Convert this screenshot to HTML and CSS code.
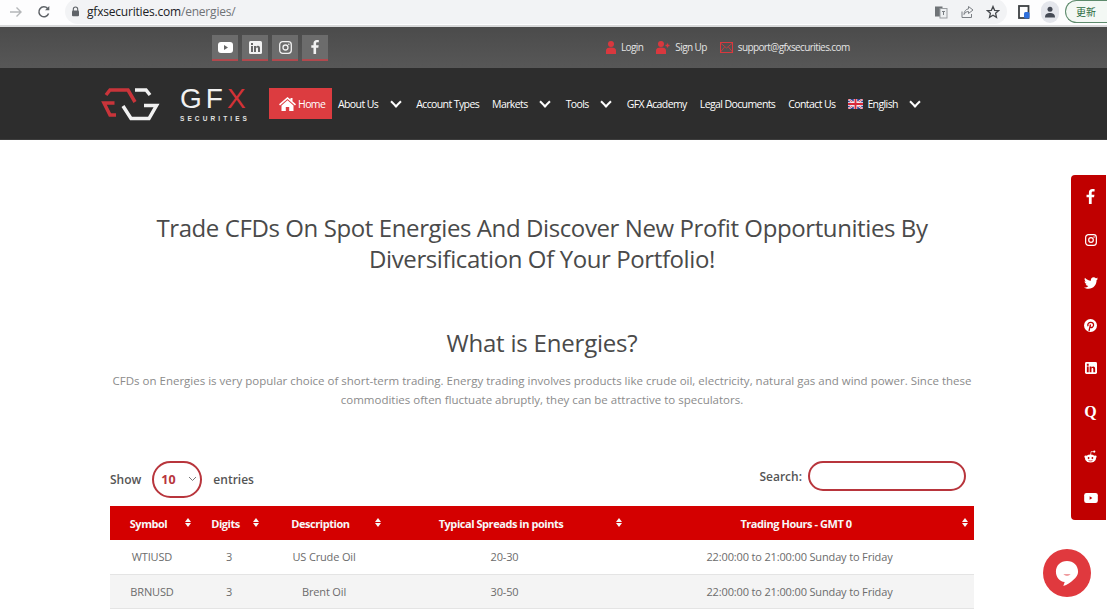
FILE: index.html
```html
<!DOCTYPE html>
<html lang="en">
<head>
    <meta charset="UTF-8">
    <title>Energies - GFX Securities</title>
    <link rel="stylesheet" href="styles.css">
</head>
<body>
    <!-- browser toolbar -->
    <div class="browser-bar">
        <svg class="nav-arrow" width="14" height="14" viewBox="0 0 14 14"><path d="M1 7h11M7.500 2.500 12 7l-4.500 4.500" fill="none" stroke="#b4b6b9" stroke-width="1.400"/></svg>
        <svg class="nav-reload" width="14" height="14" viewBox="0 0 14 14"><path d="M11.600 8.500A5 5 0 1 1 10.600 3.400" fill="none" stroke="#5f6368" stroke-width="1.500"/><path d="M12.300 1v4.300H8z" fill="#5f6368"/></svg>
        <div class="address">
            <svg width="9" height="11" viewBox="0 0 9 11"><path d="M2.300 5V3.200a2.200 2.200 0 0 1 4.400 0V5" fill="none" stroke="#5f6368" stroke-width="1.100"/><rect x="1" y="4.600" width="7" height="5.600" rx="1" fill="#5f6368"/></svg>
            <span class="host">gfxsecurities.com</span><span class="path">/energies/</span>
            <div class="address-tools">
                <svg width="14" height="14" viewBox="0 0 14 14"><rect x="1" y="1.500" width="7.500" height="10" fill="#6f7377"/><rect x="6" y="3.500" width="7" height="9.500" fill="#eef0f2" stroke="#9a9da1"/><path d="M8 6.500h3M9.500 6v4" stroke="#7b7f84"/></svg>
                <svg width="14" height="14" viewBox="0 0 14 14"><path d="M2 6.500V12.500h9.500V9" fill="none" stroke="#7b7f84"/><path d="M8.500 1.500 13 5 8.500 8.500V6.500C6.500 6.500 5 7.500 4 9.500 4 6.500 6 4 8.500 3.800z" fill="none" stroke="#7b7f84"/></svg>
                <svg width="14" height="14" viewBox="0 0 14 14"><path d="M7 1.500 8.600 5.300 12.700 5.600 9.600 8.300 10.500 12.300 7 10.200 3.500 12.300 4.400 8.300 1.300 5.600 5.400 5.300z" fill="none" stroke="#45484c" stroke-width="1.300"/></svg>
            </div>
        </div>
        <svg class="ext-icon" width="12" height="14" viewBox="0 0 12 14"><rect x="1" y="1" width="9.500" height="12" fill="none" stroke="#3c4043" stroke-width="1.800"/><rect x="6" y="7" width="5.500" height="6.500" rx="1.500" fill="#2f6fdb"/></svg>
        <div class="avatar">
            <svg width="12" height="12" viewBox="0 0 12 12"><circle cx="6" cy="3.300" r="2.500" fill="#454a55"/><path d="M1 11.500c0-3.500 2.200-4.500 5-4.500s5 1 5 4.500z" fill="#454a55"/></svg>
        </div>
        <div class="update-pill">更新</div>
    </div>

    <header class="top-bar">
        <div class="top-social">
            <a class="top-social-btn">
                <svg width="15" height="11" viewBox="0 0 15 11"><rect width="15" height="11" rx="3" fill="#fff"/><path d="M6 3l4 2.500L6 8z" fill="#666"/></svg>
            </a>
            <a class="top-social-btn">
                <svg width="13" height="13" viewBox="0 0 13 13"><rect width="13" height="13" rx="1.500" fill="#f2f2f2"/><path d="M2 5h2v6H2zM2 2h2v2H2zM5 5h2v1c.5-.8 1.200-1.200 2-1.200 1.500 0 2 1 2 2.500V11H9V7.800C9 7 8.700 6.500 8 6.500S7 7 7 7.800V11H5z" fill="#666"/></svg>
            </a>
            <a class="top-social-btn">
                <svg width="13" height="13" viewBox="0 0 13 13"><rect x=".7" y=".7" width="11.600" height="11.600" rx="3" fill="none" stroke="#f2f2f2" stroke-width="1.300"/><circle cx="6.500" cy="6.500" r="2.500" fill="none" stroke="#f2f2f2" stroke-width="1.300"/><circle cx="9.800" cy="3.200" r=".8" fill="#f2f2f2"/></svg>
            </a>
            <a class="top-social-btn">
                <svg width="8" height="14" viewBox="0 0 8 14"><path d="M2.500 14V7.800H.3V5.300h2.200V3.500C2.500 1.200 3.800 0 5.800 0c.9 0 1.700.1 2 .1v2.200H6.400c-1.100 0-1.300.5-1.300 1.300v1.700h2.600l-.4 2.500H5.100V14z" fill="#f2f2f2"/></svg>
            </a>
        </div>
        <div class="top-links">
            <a class="top-link">
                <svg width="10" height="13" viewBox="0 0 10 13"><circle cx="5" cy="3" r="3" fill="#d9383e"/><path d="M0 13V9.500C0 7.500 1.500 6.500 5 6.500s5 1 5 3V13z" fill="#d9383e"/></svg>
                Login
            </a>
            <a class="top-link">
                <svg width="14" height="13" viewBox="0 0 14 13"><circle cx="5" cy="3" r="3" fill="#d9383e"/><path d="M0 13V9.500C0 7.500 1.500 6.500 5 6.500s5 1 5 3V13z" fill="#d9383e"/><path d="M9.500 4.500h4M11.500 2.500v4" stroke="#d9383e" stroke-width="1.300"/></svg>
                Sign Up
            </a>
            <a class="top-link">
                <svg width="13" height="11" viewBox="0 0 13 11"><rect x=".5" y=".5" width="12" height="10" fill="none" stroke="#d9383e"/><path d="M.5 1 6.500 6 12.500 1M.5 10l4-5M12.500 10l-4-5" fill="none" stroke="#d9383e" stroke-width=".8"/></svg>
                support@gfxsecurities.com
            </a>
        </div>
    </header>

    <nav class="main-nav">
        <div class="logo">
            <svg class="logo-mark" width="66" height="44" viewBox="0 0 66 44">
                <path d="M10 13 14 8H32L39 20" fill="none" stroke="#c9343a" stroke-width="3.500"/>
                <path d="M18.500 21H8L14 33H20" fill="none" stroke="#c9343a" stroke-width="3.500"/>
                <path d="M39 8H50L54 13" fill="none" stroke="#f1f1f1" stroke-width="3.500"/>
                <path d="M27 24 35 36.500H53L60.500 23.500H48" fill="none" stroke="#f1f1f1" stroke-width="3.500"/>
            </svg>
            <div class="logo-word">
                <div class="logo-gfx">GF<span class="logo-x">X</span></div>
                <div class="logo-sub">SECURITIES</div>
            </div>
        </div>
        <ul class="menu">
            <li class="menu-item active">
                <svg width="17" height="14" viewBox="0 0 17 14"><path d="M8.500 0 0 7.300l1 1.100L8.500 2l7.500 6.400 1-1.100L13.500 4.300V1h-2v1.600z" fill="#fff"/><path d="M8.500 3.300 2.500 8.400V14h4.300V10h3.400v4h4.300V8.400z" fill="#fff"/></svg>
                Home
            </li>
            <li class="menu-item has-sub">About Us</li>
            <li class="menu-item">Account Types</li>
            <li class="menu-item has-sub">Markets</li>
            <li class="menu-item has-sub">Tools</li>
            <li class="menu-item">GFX Academy</li>
            <li class="menu-item">Legal Documents</li>
            <li class="menu-item">Contact Us</li>
            <li class="menu-item has-sub">
                <svg width="15" height="10" viewBox="0 0 15 10"><rect width="15" height="10" fill="#2f3f8f"/><path d="M0 0l15 10M15 0 0 10" stroke="#fff" stroke-width="2"/><path d="M0 0l15 10M15 0 0 10" stroke="#d8283a" stroke-width=".8"/><path d="M7.500 0v10M0 5h15" stroke="#fff" stroke-width="3.400"/><path d="M7.500 0v10M0 5h15" stroke="#d8283a" stroke-width="2"/></svg>
                English
            </li>
        </ul>
    </nav>

    <main class="content">
        <h1 class="page-title">Trade CFDs On Spot Energies And Discover New Profit Opportunities By Diversification Of Your Portfolio!</h1>
        <h2 class="section-title">What is Energies?</h2>
        <p class="intro">CFDs on Energies is very popular choice of short-term trading. Energy trading involves products like crude oil, electricity, natural gas and wind power. Since these commodities often fluctuate abruptly, they can be attractive to speculators.</p>

        <div class="table-controls">
            <div class="length-control">
                Show
                <div class="length-select">10
                    <svg width="9" height="6" viewBox="0 0 9 6"><path d="M1 1l3.500 3.500L8 1" fill="none" stroke="#777" stroke-width="1"/></svg>
                </div>
                entries
            </div>
            <div class="search-control">
                Search:
                <div class="search-box"></div>
            </div>
        </div>

        <table class="data-table">
            <thead>
                <tr>
                    <th class="col-symbol">Symbol</th>
                    <th class="col-digits">Digits</th>
                    <th class="col-desc">Description</th>
                    <th class="col-spread">Typical Spreads in points</th>
                    <th class="col-hours">Trading Hours - GMT 0</th>
                </tr>
            </thead>
            <tbody>
                <tr>
                    <td>WTIUSD</td>
                    <td>3</td>
                    <td>US Crude Oil</td>
                    <td>20-30</td>
                    <td>22:00:00 to 21:00:00 Sunday to Friday</td>
                </tr>
                <tr class="alt">
                    <td>BRNUSD</td>
                    <td>3</td>
                    <td>Brent Oil</td>
                    <td>30-50</td>
                    <td>22:00:00 to 21:00:00 Sunday to Friday</td>
                </tr>
            </tbody>
        </table>
    </main>

    <aside class="side-social">
        <svg width="9" height="15" viewBox="0 0 8 14"><path d="M2.500 14V7.800H.3V5.300h2.200V3.500C2.500 1.200 3.800 0 5.800 0c.9 0 1.700.1 2 .1v2.200H6.400c-1.100 0-1.300.5-1.300 1.300v1.700h2.600l-.4 2.500H5.100V14z" fill="#fff"/></svg>
        <svg width="12" height="12" viewBox="0 0 13 13"><rect x=".7" y=".7" width="11.600" height="11.600" rx="3" fill="none" stroke="#fff" stroke-width="1.300"/><circle cx="6.500" cy="6.500" r="2.500" fill="none" stroke="#fff" stroke-width="1.300"/><circle cx="9.800" cy="3.200" r=".8" fill="#fff"/></svg>
        <svg width="14" height="12" viewBox="0 0 24 20"><path d="M24 2.400c-.9.400-1.800.7-2.800.8 1-.6 1.800-1.600 2.200-2.700-1 .6-2 1-3.100 1.200C19.300.7 18 0 16.600 0c-3.200 0-5.500 3-4.800 6C7.700 5.800 4.100 3.900 1.700.9.400 3.100 1 6 3.200 7.500c-.8 0-1.600-.2-2.200-.6 0 2.300 1.600 4.400 4 4.900-.7.200-1.500.2-2.200.1.600 2 2.500 3.400 4.600 3.400C5.300 17.400 2.700 18.100 0 17.800 2.200 19.200 4.800 20 7.500 20c9.100 0 14.300-7.700 14-14.600 1-.7 1.800-1.600 2.500-3z" fill="#fff"/></svg>
        <svg width="13" height="13" viewBox="0 0 13 13"><circle cx="6.500" cy="6.500" r="6.500" fill="#fff"/><path d="M5 12l1.500-6.500M4 7.300C3.200 5 4.800 3.300 6.800 3.300s3 1.400 2.700 3.200c-.3 1.600-2 2.700-3.300 1.500" fill="none" stroke="#c00000" stroke-width="1.300"/></svg>
        <svg width="12" height="12" viewBox="0 0 13 13"><rect width="13" height="13" rx="1.500" fill="#fff"/><path d="M2 5h2v6H2zM2 2h2v2H2zM5 5h2v1c.5-.8 1.200-1.200 2-1.200 1.500 0 2 1 2 2.500V11H9V7.800C9 7 8.700 6.500 8 6.500S7 7 7 7.800V11H5z" fill="#c00000"/></svg>
        <span class="quora">Q</span>
        <svg width="13" height="13" viewBox="0 0 13 13"><ellipse cx="6.500" cy="8.500" rx="5.500" ry="4" fill="#fff"/><circle cx="1.700" cy="6.700" r="1.300" fill="#fff"/><circle cx="11.300" cy="6.700" r="1.300" fill="#fff"/><circle cx="10.300" cy="1.600" r="1.100" fill="#fff"/><path d="M6.500 5 7.200 1.500l3 .3" fill="none" stroke="#fff" stroke-width=".7"/><circle cx="4.600" cy="8" r=".9" fill="#c00000"/><circle cx="8.400" cy="8" r=".9" fill="#c00000"/><path d="M4.500 10.300c1.300.8 2.700.8 4 0" fill="none" stroke="#c00000" stroke-width=".7"/></svg>
        <svg width="14" height="10" viewBox="0 0 15 11"><rect width="15" height="11" rx="2.500" fill="#fff"/><path d="M6 3.500l3 2-3 2z" fill="#c00000"/></svg>
    </aside>

    <div class="chat-button">
        <svg width="24" height="27" viewBox="0 0 26 29"><path d="M13 1C6 1 1 6 1 12.500c0 6 4 10.500 9.500 11.300L9 28c4-1.400 8-3.500 11-6.800 3-2.700 5-5.300 5-8.700C25 6 20 1 13 1z" fill="#fff"/><path d="M9 15.500c2.500 1.500 5.500 1.500 8 0z" fill="#e0393e"/></svg>
    </div>
</body>
</html>
```

FILE: styles.css
```css
* {
    box-sizing: border-box;
}

html, body {
    margin: 0;
    height: 609px;
    overflow: hidden;
}

body {
    font-family: "Open Sans", "Noto Sans", sans-serif;
    background-color: #fff;
    color: #7d7d7d;
}

/* browser toolbar */
.browser-bar {
    height: 27px;
    display: flex;
    align-items: center;
    padding-left: 9px;
    padding-bottom: 2px;
    background-color: #fdfdfe;
    border-bottom: 2px solid #d8d9da;
}

.nav-reload {
    margin-left: 14px;
}

.address {
    flex: 1;
    height: 25px;
    margin-left: 14px;
    padding-left: 6px;
    display: flex;
    align-items: center;
    background-color: #f2f3f5;
    border-radius: 13px;
    font-size: 12px;
    letter-spacing: -0.2px;
}

.address .host {
    margin-left: 7px;
    color: #202124;
}

.address .path {
    color: #6f7276;
}

.address-tools {
    margin-left: auto;
    padding-right: 7px;
    display: flex;
    gap: 12px;
}

.ext-icon {
    margin-left: 11px;
}

.avatar {
    width: 18px;
    height: 22px;
    margin-left: 11px;
    display: flex;
    align-items: center;
    justify-content: center;
    background-color: #e4e6ec;
    border-radius: 9px;
}

.update-pill {
    width: 48px;
    height: 23px;
    margin-left: 6px;
    margin-right: -6px;
    padding-left: 10px;
    display: flex;
    align-items: center;
    border: 1px solid #5d8a6c;
    border-right: none;
    border-radius: 12px 0 0 12px;
    background-color: #f3f8f4;
    color: #2c6b42;
    font-family: "Noto Sans CJK SC", sans-serif;
    font-size: 10px;
}

/* top strip */
.top-bar {
    height: 41px;
    display: flex;
    align-items: flex-start;
    padding-left: 212px;
    background: linear-gradient(180deg, #4b4b4b, #575757);
}

.top-social {
    display: flex;
    gap: 4px;
    padding-top: 8px;
}

.top-social-btn {
    width: 26px;
    height: 26px;
    display: flex;
    align-items: center;
    justify-content: center;
    background-color: #6c6c6c;
    border-bottom: 2px solid #b0494e;
}

.top-links {
    display: flex;
    align-items: center;
    gap: 13px;
    height: 40px;
    margin-left: 278px;
}

.top-link {
    display: flex;
    align-items: center;
    gap: 5px;
    color: #e4e4e4;
    font-size: 10px;
    letter-spacing: -0.6px;
}

/* main nav */
.main-nav {
    height: 72px;
    display: flex;
    align-items: center;
    padding-left: 96px;
    background-color: #2d2d2d;
    border-bottom: 1px solid #3d3d3d;
}

.logo {
    display: flex;
    align-items: center;
    gap: 18px;
    width: 173px;
}

.logo-word {
    font-family: "Liberation Sans", sans-serif;
}

.logo-gfx {
    color: #f1f1f1;
    font-size: 28px;
    line-height: 30px;
    letter-spacing: 4px;
}

.logo-x {
    color: #d33237;
}

.logo-sub {
    color: #e0e0e0;
    font-size: 6.500px;
    font-weight: 700;
    letter-spacing: 3.100px;
    line-height: 9px;
}

.menu {
    list-style: none;
    margin: 0;
    padding: 0;
    display: flex;
    align-items: center;
    gap: 13px;
}

.menu-item {
    display: flex;
    align-items: center;
    gap: 4px;
    color: #fff;
    font-size: 10.500px;
    letter-spacing: -0.6px;
    white-space: nowrap;
}

.menu-item.active {
    width: 63px;
    height: 31px;
    margin-right: -7px;
    padding-left: 10px;
    gap: 2px;
    background-color: #dc3c40;
}

.menu-item.has-sub::after {
    content: "";
    width: 6px;
    height: 6px;
    margin: -3px 3.500px 0 9.500px;
    border-right: 2px solid #fff;
    border-bottom: 2px solid #fff;
    transform: rotate(45deg);
}

/* page content */
.content {
    width: 864px;
    margin-left: 110px;
    text-align: center;
}

.page-title {
    margin: 72px 0 0;
    padding: 0 20px;
    color: #4a4a4a;
    font-size: 24px;
    line-height: 31px;
    font-weight: 400;
    letter-spacing: -0.4px;
}

.section-title {
    margin: 53px 0 0;
    color: #4a4a4a;
    font-size: 24px;
    line-height: 31px;
    font-weight: 400;
    letter-spacing: -0.2px;
}

.intro {
    margin: 13px 0 0;
    font-size: 11.500px;
    line-height: 19px;
    color: #8b8b8b;
}

.table-controls {
    margin-top: 51px;
    height: 38px;
    display: flex;
    justify-content: space-between;
    align-items: flex-start;
    font-size: 12px;
    font-weight: 600;
    color: #555;
}

.length-control {
    display: flex;
    align-items: center;
    gap: 11px;
    height: 38px;
}

.length-select {
    width: 50px;
    height: 37px;
    padding: 0 3px 0 7px;
    display: flex;
    align-items: center;
    justify-content: space-between;
    border: 2px solid #b8353c;
    border-radius: 19px;
    color: #b8353c;
    font-size: 12.500px;
    font-weight: 700;
}

.search-control {
    display: flex;
    align-items: center;
    gap: 6px;
    height: 30px;
    margin-top: 1px;
    margin-right: 8px;
}

.search-box {
    width: 158px;
    height: 30px;
    border: 2px solid #b8353c;
    border-radius: 15px;
}

.data-table {
    width: 864px;
    margin-top: 8px;
    border-collapse: collapse;
    table-layout: fixed;
    font-size: 11px;
}

.data-table th {
    position: relative;
    height: 34px;
    padding: 0 7px 0 0;
    background-color: #d40000;
    color: #f7f7f7;
    font-weight: 700;
    letter-spacing: -0.45px;
}

/* sort arrows */
.data-table th::before,
.data-table th::after {
    content: "";
    position: absolute;
    right: 3px;
    border-left: 3.500px solid transparent;
    border-right: 3.500px solid transparent;
}

.data-table th::before {
    top: 12px;
    border-bottom: 4px solid #f7f7f7;
}

.data-table th::after {
    top: 17px;
    border-top: 4px solid #f7f7f7;
}

.data-table .col-digits::before,
.data-table .col-digits::after {
    right: 5px;
}

.data-table .col-hours::before,
.data-table .col-hours::after {
    right: 6px;
}

.data-table td {
    height: 34px;
    color: #6c6c6c;
    letter-spacing: -0.15px;
    border-bottom: 1px solid #e4e4e4;
}

.data-table .alt td {
    background-color: #f4f4f4;
}

.col-symbol { width: 84px; }
.col-digits { width: 70px; }
.col-desc { width: 120px; }
.col-spread { width: 241px; }
.col-hours { width: 349px; }

/* fixed overlays */
.side-social {
    position: fixed;
    top: 175px;
    right: 1px;
    width: 35px;
    height: 345px;
    padding: 14px 0 17px 4px;
    display: flex;
    flex-direction: column;
    align-items: center;
    justify-content: space-between;
    background-color: #c00000;
    border-radius: 4px 0 0 4px;
}

.quora {
    color: #fff;
    font-family: "Liberation Serif", serif;
    font-size: 16px;
    font-weight: 700;
    line-height: 15px;
}

.chat-button {
    position: fixed;
    top: 549px;
    left: 1043px;
    width: 48px;
    height: 48px;
    display: flex;
    align-items: center;
    justify-content: center;
    background-color: #e0393e;
    border-radius: 50%;
}
```
